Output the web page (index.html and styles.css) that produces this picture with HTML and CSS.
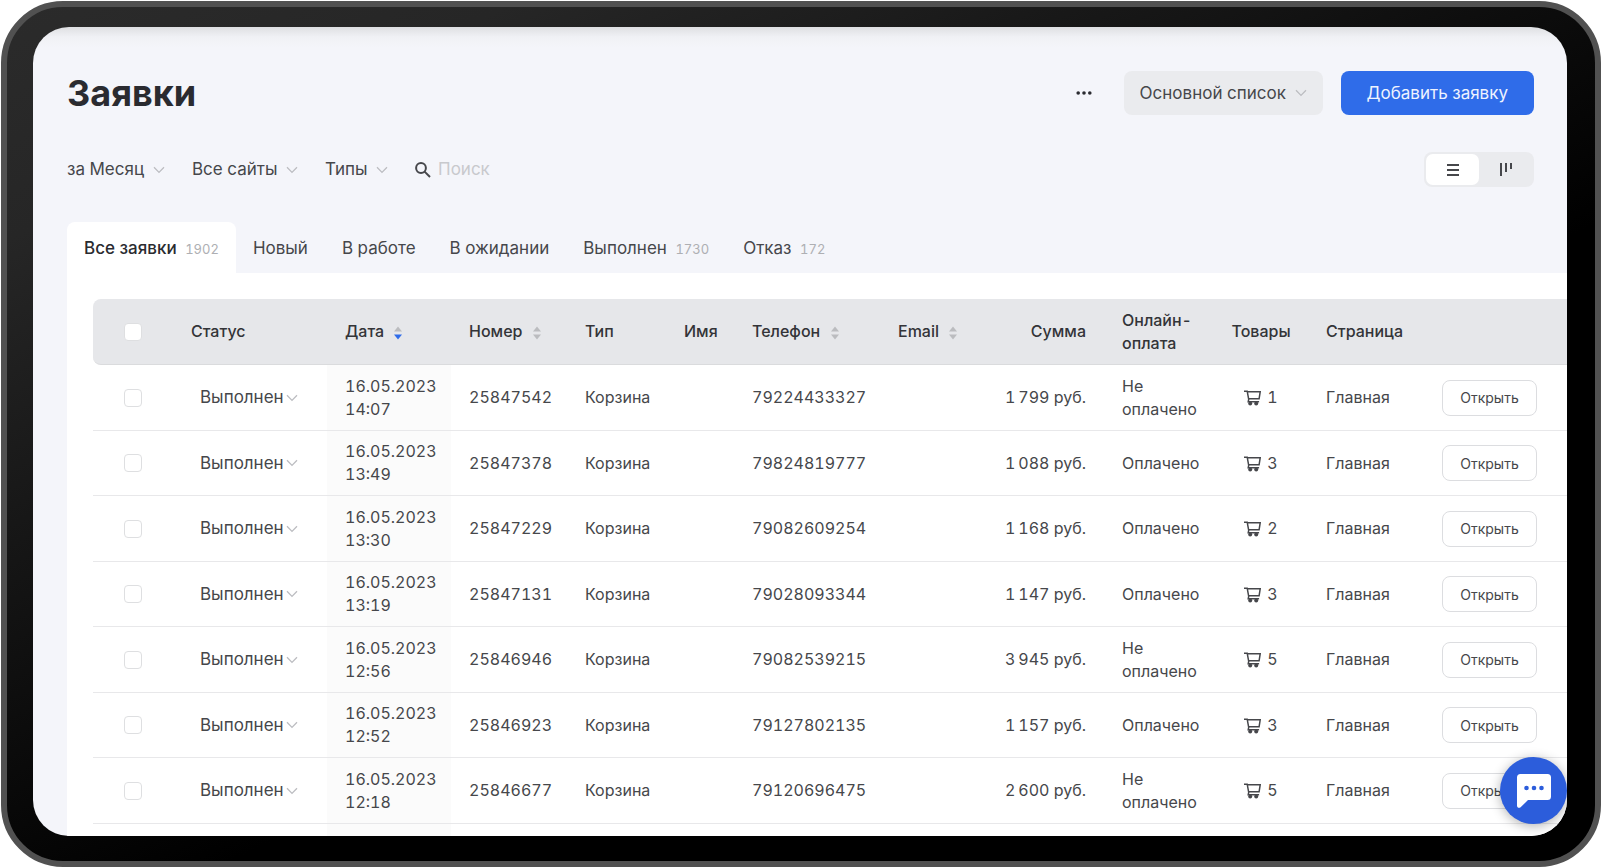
FILE: index.html
```html
<!DOCTYPE html>
<html lang="ru">
  <head>
    <meta charset="UTF-8" />
    <meta name="viewport" content="width=device-width, initial-scale=1.0" />
    <title>Заявки</title>
    <link rel="stylesheet" href="styles.css">
  </head>
  <body>
    <!-- Shared icons -->
    <svg class="sprite" aria-hidden="true">
      <symbol id="chevron" viewBox="0 0 12 8">
        <path d="M1 1.2 6 6.4 11 1.2" fill="none" stroke="currentColor" stroke-width="1.3" />
      </symbol>
      <symbol id="sort" viewBox="0 0 8 14">
        <path class="sort-up" d="M0 5.4 4 .6 8 5.4z" />
        <path class="sort-down" d="M0 8.6h8L4 13.4z" />
      </symbol>
      <symbol id="cart" viewBox="0 0 17 16">
        <path d="M0 1.2h3.2l1.4 7.6h10.5l1.1-7H3.4M4.8 8.8l-.6 3h10.9" fill="none" stroke="currentColor" stroke-width="1.5" />
        <circle cx="6.2" cy="13.6" r="2" fill="currentColor" />
        <circle cx="12.2" cy="13.6" r="2" fill="currentColor" />
      </symbol>
    </svg>

    <div class="device">
      <main class="screen">
        <header class="header">
          <h1>Заявки</h1>
          <button class="more" aria-label="Ещё">
            <svg width="16" height="4" viewBox="0 0 16 4"><circle cx="2.2" cy="2" r="1.8" /><circle cx="8" cy="2" r="1.8" /><circle cx="13.8" cy="2" r="1.8" /></svg>
          </button>
          <div class="select select-box">
            <select aria-label="Список"><option>Основной список</option></select>
            <svg class="chevron"><use href="#chevron" /></svg>
          </div>
          <button class="add">Добавить заявку</button>
        </header>

        <div class="filters">
          <div class="select">
            <select aria-label="Период"><option>за Месяц</option></select>
            <svg class="chevron"><use href="#chevron" /></svg>
          </div>
          <div class="select">
            <select aria-label="Сайты"><option>Все сайты</option></select>
            <svg class="chevron"><use href="#chevron" /></svg>
          </div>
          <div class="select">
            <select aria-label="Типы"><option>Типы</option></select>
            <svg class="chevron"><use href="#chevron" /></svg>
          </div>
          <label class="search">
            <svg width="16" height="16" viewBox="0 0 16 16"><circle cx="6" cy="6" r="4.9" /><path d="M9.6 9.6 15 15" /></svg>
            <input type="search" placeholder="Поиск" aria-label="Поиск" />
          </label>
          <div class="view">
            <button class="active" aria-label="Таблица">
              <svg width="12" height="12" viewBox="0 0 12 12"><path d="M0 1h12M0 6h12M0 11h12" /></svg>
            </button>
            <button aria-label="Доска">
              <svg width="12" height="13" viewBox="0 0 12 13"><path d="M1 0v13M6 0v9M11 0v6" /></svg>
            </button>
          </div>
        </div>

        <nav class="tabs">
          <a href="#" class="active">Все заявки <span>1902</span></a>
          <a href="#">Новый</a>
          <a href="#">В работе</a>
          <a href="#">В ожидании</a>
          <a href="#">Выполнен <span>1730</span></a>
          <a href="#">Отказ <span>172</span></a>
        </nav>

        <section class="panel">
          <table>
            <colgroup>
              <col class="c-check" /><col class="c-status" /><col class="c-date" /><col class="c-number" />
              <col class="c-type" /><col class="c-name" /><col class="c-phone" /><col class="c-email" />
              <col class="c-sum" /><col class="c-pay" /><col class="c-goods" /><col class="c-page" /><col />
            </colgroup>
            <thead>
              <tr>
                <th class="check"><input type="checkbox" aria-label="Выбрать все" /></th>
                <th>Статус</th>
                <th>Дата <svg class="sort desc"><use href="#sort" /></svg></th>
                <th>Номер <svg class="sort"><use href="#sort" /></svg></th>
                <th>Тип</th>
                <th>Имя</th>
                <th>Телефон <svg class="sort"><use href="#sort" /></svg></th>
                <th>Email <svg class="sort"><use href="#sort" /></svg></th>
                <th class="sum">Сумма</th>
                <th>Онлайн-оплата</th>
                <th class="goods">Товары</th>
                <th>Страница</th>
                <th></th>
              </tr>
            </thead>
            <tbody>
              <tr>
                <td class="check"><input type="checkbox" aria-label="25847542" /></td>
                <td class="status"><div class="select"><select aria-label="Статус"><option>Выполнен</option></select><svg class="chevron"><use href="#chevron" /></svg></div></td>
                <td class="date">16.05.2023 14:07</td>
                <td>25847542</td>
                <td>Корзина</td>
                <td></td>
                <td>79224433327</td>
                <td></td>
                <td class="sum">1&thinsp;799 руб.</td>
                <td>Не оплачено</td>
                <td class="goods"><svg class="cart"><use href="#cart" /></svg>1</td>
                <td>Главная</td>
                <td><button class="open">Открыть</button></td>
              </tr>
              <tr>
                <td class="check"><input type="checkbox" aria-label="25847378" /></td>
                <td class="status"><div class="select"><select aria-label="Статус"><option>Выполнен</option></select><svg class="chevron"><use href="#chevron" /></svg></div></td>
                <td class="date">16.05.2023 13:49</td>
                <td>25847378</td>
                <td>Корзина</td>
                <td></td>
                <td>79824819777</td>
                <td></td>
                <td class="sum">1&thinsp;088 руб.</td>
                <td>Оплачено</td>
                <td class="goods"><svg class="cart"><use href="#cart" /></svg>3</td>
                <td>Главная</td>
                <td><button class="open">Открыть</button></td>
              </tr>
              <tr>
                <td class="check"><input type="checkbox" aria-label="25847229" /></td>
                <td class="status"><div class="select"><select aria-label="Статус"><option>Выполнен</option></select><svg class="chevron"><use href="#chevron" /></svg></div></td>
                <td class="date">16.05.2023 13:30</td>
                <td>25847229</td>
                <td>Корзина</td>
                <td></td>
                <td>79082609254</td>
                <td></td>
                <td class="sum">1&thinsp;168 руб.</td>
                <td>Оплачено</td>
                <td class="goods"><svg class="cart"><use href="#cart" /></svg>2</td>
                <td>Главная</td>
                <td><button class="open">Открыть</button></td>
              </tr>
              <tr>
                <td class="check"><input type="checkbox" aria-label="25847131" /></td>
                <td class="status"><div class="select"><select aria-label="Статус"><option>Выполнен</option></select><svg class="chevron"><use href="#chevron" /></svg></div></td>
                <td class="date">16.05.2023 13:19</td>
                <td>25847131</td>
                <td>Корзина</td>
                <td></td>
                <td>79028093344</td>
                <td></td>
                <td class="sum">1&thinsp;147 руб.</td>
                <td>Оплачено</td>
                <td class="goods"><svg class="cart"><use href="#cart" /></svg>3</td>
                <td>Главная</td>
                <td><button class="open">Открыть</button></td>
              </tr>
              <tr>
                <td class="check"><input type="checkbox" aria-label="25846946" /></td>
                <td class="status"><div class="select"><select aria-label="Статус"><option>Выполнен</option></select><svg class="chevron"><use href="#chevron" /></svg></div></td>
                <td class="date">16.05.2023 12:56</td>
                <td>25846946</td>
                <td>Корзина</td>
                <td></td>
                <td>79082539215</td>
                <td></td>
                <td class="sum">3&thinsp;945 руб.</td>
                <td>Не оплачено</td>
                <td class="goods"><svg class="cart"><use href="#cart" /></svg>5</td>
                <td>Главная</td>
                <td><button class="open">Открыть</button></td>
              </tr>
              <tr>
                <td class="check"><input type="checkbox" aria-label="25846923" /></td>
                <td class="status"><div class="select"><select aria-label="Статус"><option>Выполнен</option></select><svg class="chevron"><use href="#chevron" /></svg></div></td>
                <td class="date">16.05.2023 12:52</td>
                <td>25846923</td>
                <td>Корзина</td>
                <td></td>
                <td>79127802135</td>
                <td></td>
                <td class="sum">1&thinsp;157 руб.</td>
                <td>Оплачено</td>
                <td class="goods"><svg class="cart"><use href="#cart" /></svg>3</td>
                <td>Главная</td>
                <td><button class="open">Открыть</button></td>
              </tr>
              <tr>
                <td class="check"><input type="checkbox" aria-label="25846677" /></td>
                <td class="status"><div class="select"><select aria-label="Статус"><option>Выполнен</option></select><svg class="chevron"><use href="#chevron" /></svg></div></td>
                <td class="date">16.05.2023 12:18</td>
                <td>25846677</td>
                <td>Корзина</td>
                <td></td>
                <td>79120696475</td>
                <td></td>
                <td class="sum">2&thinsp;600 руб.</td>
                <td>Не оплачено</td>
                <td class="goods"><svg class="cart"><use href="#cart" /></svg>5</td>
                <td>Главная</td>
                <td><button class="open">Открыть</button></td>
              </tr>
              <tr>
                <td colspan="2"></td>
                <td class="date"></td>
                <td colspan="10"></td>
              </tr>
            </tbody>
          </table>
        </section>

        <button class="chat" aria-label="Чат">
          <svg width="34" height="34" viewBox="0 0 34 34">
            <path d="M3.5 0h27A3.5 3.5 0 0 1 34 3.5v19a3.5 3.5 0 0 1-3.5 3.5H11L3.6 33.2C2.2 34.5 0 33.8 0 31.8V3.5A3.5 3.5 0 0 1 3.5 0z" fill="#fff" />
            <circle cx="9.5" cy="14" r="2.3" /><circle cx="17" cy="14" r="2.3" /><circle cx="24.5" cy="14" r="2.3" />
          </svg>
        </button>
      </main>
    </div>
  </body>
</html>
```

FILE: styles.css
```css
* {
  box-sizing: border-box;
}
body {
  margin: 0;
  padding: 1px;
  background: #fff;
  color: #46474b;
  font-family: Inter, "Liberation Sans", sans-serif;
  font-size: 17px;
  line-height: 23px;
  font-variant-numeric: tabular-nums;
}
button,
input,
select {
  margin: 0;
  padding: 0;
  border: none;
  background: none;
  color: inherit;
  font: inherit;
}
button {
  cursor: pointer;
}
h1 {
  margin: 0 auto 0 0;
  color: #2a2b30;
  font-size: 36px;
  line-height: 44px;
  font-weight: 700;
}
.sprite {
  display: none;
}

/* Tablet frame */
.device {
  height: calc(100vh - 2px);
  padding: 20px 28px 25px 26px;
  border: 6px solid #515151;
  border-radius: 62px;
  background: linear-gradient(155deg, #2b2b2b 0%, #262626 15%, #000 60%);
  background-origin: border-box;
}
.screen {
  position: relative;
  display: flex;
  flex-direction: column;
  height: 100%;
  overflow: hidden;
  border-radius: 36px;
  background: linear-gradient(#dedfe2, #f0f1f5 10px, #f4f5fa 20px);
}

.header {
  display: flex;
  align-items: center;
  padding: 44px 33px 0 34px;
}
.more {
  display: flex;
  padding: 12px;
  margin-right: 20px;
  fill: #2a2b30;
}
.select {
  display: inline-grid;
  align-items: center;
}
.select select {
  grid-area: 1 / 1;
  appearance: none;
  padding-right: 20px;
  cursor: pointer;
}
.chevron {
  grid-area: 1 / 1;
  justify-self: end;
  width: 12px;
  height: 8px;
  color: #bcbdc1;
  pointer-events: none;
}
.select-box {
  margin-right: 18px;
  padding: 0 16px;
  border-radius: 8px;
  background: #eaebee;
}
.select-box select {
  height: 44px;
}
.add {
  height: 44px;
  padding: 0 26px;
  border-radius: 8px;
  background: #2f6ce9;
  color: #eef3ff;
}

.filters {
  display: flex;
  align-items: center;
  gap: 27px;
  padding: 37px 33px 0 34px;
}
.search {
  display: flex;
  align-items: center;
  gap: 7px;
}
.search svg {
  fill: none;
  stroke: #46474b;
  stroke-width: 2;
}
.search input {
  width: 160px;
  outline: none;
}
.search input::placeholder {
  color: #c8c9cd;
}
.view {
  display: flex;
  margin-left: auto;
  padding: 2px;
  border-radius: 8px;
  background: #eaebee;
}
.view button {
  display: grid;
  place-items: center;
  width: 53px;
  height: 31px;
  border-radius: 7px;
}
.view .active {
  background: #fff;
}
.view svg {
  fill: none;
  stroke: #46474b;
  stroke-width: 2;
}

.tabs {
  display: flex;
  padding: 35px 0 0 34px;
}
.tabs a {
  padding: 15px 17px 12px;
  color: #46474b;
  text-decoration: none;
  white-space: nowrap;
}
.tabs .active {
  border-radius: 8px 8px 0 0;
  background: #fff;
  color: #2a2b30;
  font-weight: 500;
}
.tabs span {
  margin-left: 4px;
  color: #aeafb3;
  font-size: 13px;
  font-weight: 400;
}

.panel {
  flex: 1;
  margin-left: 34px;
  padding: 26px 0 0 26px;
  background: #fff;
}
table {
  width: 100%;
  min-width: 1440px;
  border-spacing: 0;
  table-layout: fixed;
  font-size: 16px;
}
.c-check { width: 80px; }
.c-status { width: 154px; }
.c-date { width: 124px; }
.c-number { width: 116px; }
.c-type { width: 99px; }
.c-name { width: 68px; }
.c-phone { width: 146px; }
.c-email { width: 120px; }
.c-sum { width: 104px; }
.c-pay { width: 110px; }
.c-goods { width: 94px; }
.c-page { width: 116px; }
th,
td {
  height: 65px;
  padding: 0 18px;
  border-bottom: 1px solid #e8e8ea;
  text-align: left;
}
tbody tr:nth-child(odd) td {
  height: 66px;
}
th {
  height: 66px;
  border-color: #dadbdd;
  background: #e6e7ea;
  color: #333438;
  font-weight: 500;
}
th:first-child {
  border-radius: 8px 0 0 8px;
}
.check {
  line-height: 0;
  text-align: center;
}
.check input {
  appearance: none;
  width: 18px;
  height: 18px;
  border: 1px solid #dedfe1;
  border-radius: 4px;
  background: #fff;
}
.status {
  padding-left: 27px;
  font-size: 17px;
}
.status .select select {
  padding-right: 14px;
}
.date {
  background: #fbfbfb;
}
.sum {
  padding-left: 0;
  text-align: right;
  white-space: nowrap;
}
.goods {
  padding: 0;
  text-align: center;
}
.sort {
  width: 8px;
  height: 14px;
  margin-left: 6px;
  vertical-align: -3px;
  color: #bbbcbf;
  fill: currentColor;
}
.sort-down {
  fill: var(--down, currentColor);
}
.desc {
  --down: #2f6ce9;
}
.cart {
  width: 17px;
  height: 16px;
  margin-right: 6px;
  vertical-align: -3px;
}
.open {
  width: 95px;
  height: 36px;
  border: 1px solid #dcdde0;
  border-radius: 8px;
  background: #fff;
  font-size: 14px;
}

/* Support chat */
.chat {
  position: absolute;
  right: 0;
  bottom: 12px;
  display: grid;
  place-items: center;
  width: 67px;
  height: 67px;
  border-radius: 50%;
  background: #2c5ddb;
  box-shadow: 0 2px 12px rgba(0, 0, 0, 0.3);
  fill: #2c5ddb;
}
```
